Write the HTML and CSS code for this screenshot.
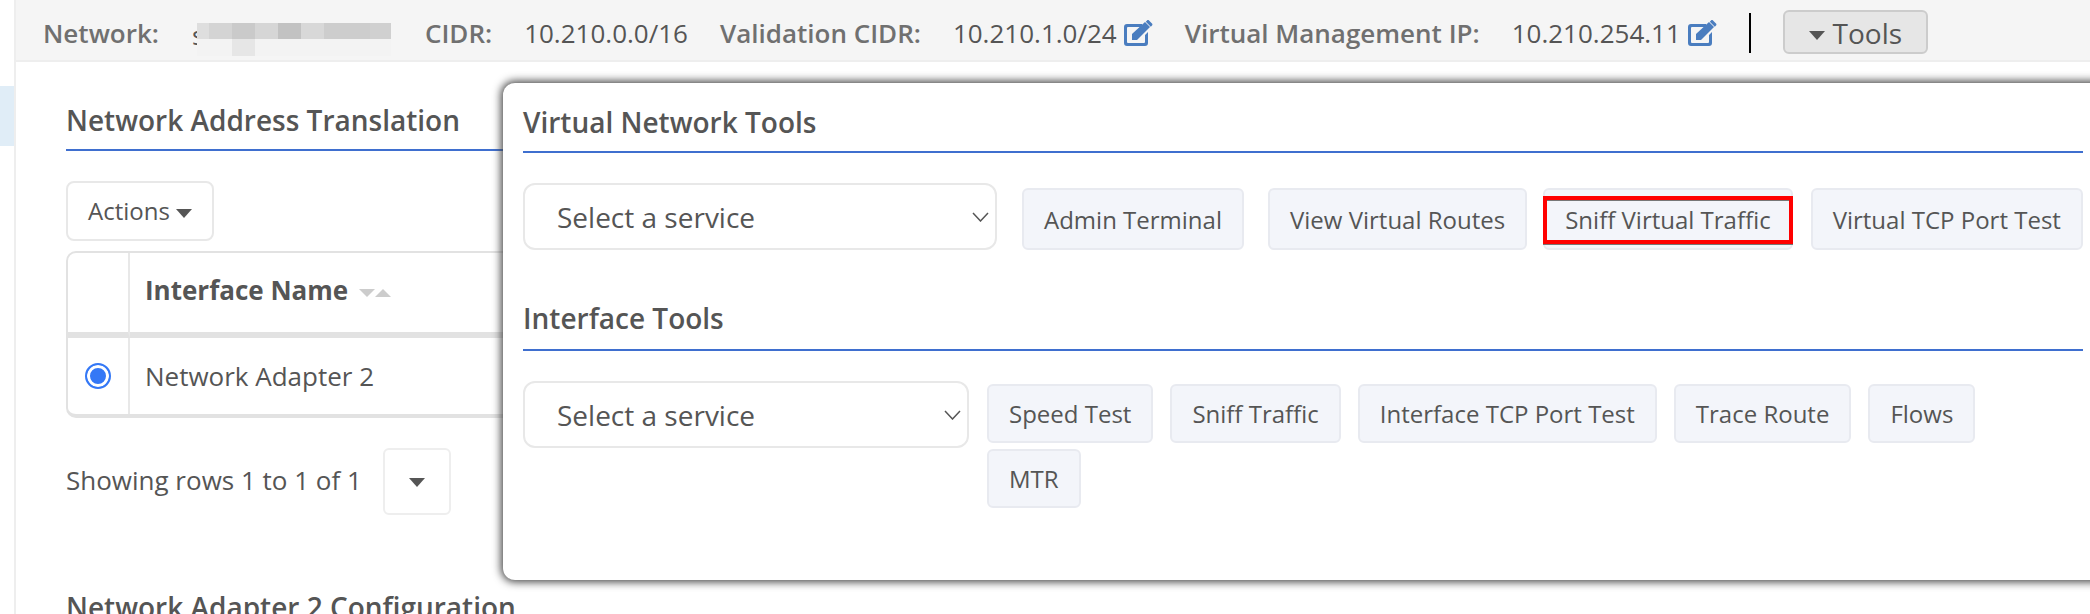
FILE: index.html
```html
<!DOCTYPE html>
<html lang="en">

<head>
    <meta charset="UTF-8" />
    <meta name="viewport" content="width=device-width, initial-scale=1.0" />
    <title>Network Tools</title>
    <link rel="stylesheet" href="styles.css">
</head>

<body>
    <div class="sidebar">
        <div class="sidebar-active"></div>
    </div>

    <div class="main">
        <div class="topbar">
            <span class="label label-network">Network:</span>
            <span class="masked">
                <span class="masked-letter">s</span>
                <span class="pixels">
                    <i class="p5"></i><i class="p2"></i><i class="p4"></i><i class="p6"></i><i class="p7"></i><i class="p8"></i><i class="p3"></i><i class="p3"></i><i class="p1"></i>
                    <i class="p0"></i><i class="p0"></i><i class="p9"></i><i class="p0"></i><i class="p0"></i><i class="p0"></i><i class="p0"></i><i class="p0"></i><i class="p0"></i>
                </span>
            </span>
            <span class="label label-cidr">CIDR:</span>
            <span class="value value-cidr">10.210.0.0/16</span>
            <span class="label label-validation">Validation CIDR:</span>
            <span class="value">10.210.1.0/24</span>
            <svg class="edit-icon" viewBox="0 0 30 28"><path d="M4 5h15v3H5a1 1 0 0 0-1 1v14a1 1 0 0 0 1 1h16a1 1 0 0 0 1-1v-7l3-3v11a3 3 0 0 1-3 3H4a3 3 0 0 1-3-3V8a3 3 0 0 1 3-3z"/><path d="M9 15 22 3l5 5-13 13H9z"/><path d="M24 1.500c.6-.6 1.500-.6 2 0l3 3c.6.6.6 1.400 0 2l-1.200 1.200-5-5z"/></svg>
            <span class="label label-vip">Virtual Management IP:</span>
            <span class="value">10.210.254.11</span>
            <svg class="edit-icon" viewBox="0 0 30 28"><path d="M4 5h15v3H5a1 1 0 0 0-1 1v14a1 1 0 0 0 1 1h16a1 1 0 0 0 1-1v-7l3-3v11a3 3 0 0 1-3 3H4a3 3 0 0 1-3-3V8a3 3 0 0 1 3-3z"/><path d="M9 15 22 3l5 5-13 13H9z"/><path d="M24 1.500c.6-.6 1.500-.6 2 0l3 3c.6.6.6 1.400 0 2l-1.200 1.200-5-5z"/></svg>
            <span class="divider"></span>
            <button type="button" class="tools-btn"><span class="caret"></span>Tools</button>
        </div>

        <div class="content">
            <h2 class="section-title">Network Address Translation</h2>
            <button type="button" class="actions-btn">Actions<span class="caret"></span></button>

            <table class="nat-table">
                <thead>
                    <tr>
                        <th class="radio-col"></th>
                        <th>Interface Name<span class="sort"><span class="sort-down"></span><span class="sort-up"></span></span></th>
                    </tr>
                </thead>
                <tbody>
                    <tr>
                        <td class="radio-col"><span class="radio"></span></td>
                        <td>Network Adapter 2</td>
                    </tr>
                </tbody>
            </table>

            <div class="pager">
                <span class="pager-text">Showing rows 1 to 1 of 1</span>
                <button type="button" class="pager-btn"><span class="caret"></span></button>
            </div>

            <h2 class="section-title section-config">Network Adapter 2 Configuration</h2>
        </div>
    </div>

    <div class="tools-popup">
        <h3 class="popup-title">Virtual Network Tools</h3>
        <div class="tool-row">
            <div class="fake-select select-virtual">Select a service
                <svg class="chevron" viewBox="0 0 17 10"><path d="M1 1l7.500 8 7.500-8"/></svg>
            </div>
            <div class="tool-buttons virtual-buttons">
                <button type="button" class="tool-btn btn-admin">Admin Terminal</button>
                <button type="button" class="tool-btn btn-routes">View Virtual Routes</button>
                <button type="button" class="tool-btn btn-sniff">Sniff Virtual Traffic<span class="highlight"></span></button>
                <button type="button" class="tool-btn">Virtual TCP Port Test</button>
            </div>
        </div>

        <h3 class="popup-title title-interface">Interface Tools</h3>
        <div class="tool-row">
            <div class="fake-select select-interface">Select a service
                <svg class="chevron" viewBox="0 0 17 10"><path d="M1 1l7.500 8 7.500-8"/></svg>
            </div>
            <div class="tool-buttons interface-buttons">
                <button type="button" class="tool-btn">Speed Test</button>
                <button type="button" class="tool-btn">Sniff Traffic</button>
                <button type="button" class="tool-btn">Interface TCP Port Test</button>
                <button type="button" class="tool-btn">Trace Route</button>
                <button type="button" class="tool-btn">Flows</button>
                <button type="button" class="tool-btn">MTR</button>
            </div>
        </div>
    </div>
</body>

</html>
```

FILE: styles.css
```css
* {
    box-sizing: border-box;
}

html,
body {
    height: 100%;
}

body {
    margin: 0;
    display: flex;
    overflow: hidden;
    position: relative;
    background-color: white;
    color: #555;
    font-family: "Open Sans", "Liberation Sans", sans-serif;
    font-size: 26px;
}

.sidebar {
    width: 16px;
    flex: none;
    padding-top: 86px;
    border-right: 2px solid #eeeeee;
}

.sidebar-active {
    height: 60px;
    background-color: #e0edf7;
}

.main {
    flex: 1;
    min-width: 0;
}

/* top bar */
.topbar {
    height: 62px;
    display: flex;
    align-items: center;
    padding: 6px 0 0 27px;
    background-color: #f5f5f5;
    border-bottom: 2px solid #eeeeee;
    white-space: nowrap;
}

.label {
    color: #707070;
    font-weight: 600;
}

.value {
    margin-left: 32px;
    color: #555;
}

.masked {
    width: 199px;
    height: 33px;
    margin: 12px 0 0 33px;
    display: flex;
    color: #555;
}

.masked-letter {
    width: 5px;
    margin-top: -6px;
}

.pixels {
    position: relative;
    width: 194px;
    height: 33px;
    display: grid;
    grid-template-columns: 12px repeat(7, 23px) 21px;
    grid-template-rows: 16px 17px;
}

.p0 {
    background-color: #f3f3f3;
}

.p1 {
    background-color: #d0d0d0;
}

.p2 {
    background-color: #d4d4d4;
}

.p3 {
    background-color: #cdcdcd;
}

.p4 {
    background-color: #cacaca;
}

.p5 {
    background-color: #dedede;
}

.p6 {
    background-color: #d6d6d6;
}

.p7 {
    background-color: #c2c2c2;
}

.p8 {
    background-color: #d8d8d8;
}

.p9 {
    background-color: #e6e6e6;
}

.label-cidr {
    margin-left: 34px;
}

.label-validation {
    margin-left: 32px;
}

.label-vip {
    margin-left: 32px;
}

.edit-icon {
    width: 30px;
    height: 28px;
    margin-left: 6px;
    fill: #4a7dbf;
}

.divider {
    width: 2px;
    height: 40px;
    margin-left: 32px;
    background-color: black;
}

.tools-btn {
    width: 145px;
    height: 44px;
    margin-left: 32px;
    margin-bottom: 2px;
    padding: 2px 0 0;
    display: flex;
    align-items: center;
    justify-content: center;
    background-color: #e6e6e6;
    border: 2px solid #cccccc;
    border-radius: 6px;
    color: #555;
    font-family: inherit;
    font-size: 28px;
}

.tools-btn .caret {
    margin-right: 8px;
    margin-top: 4px;
}

.caret {
    display: inline-block;
    vertical-align: middle;
    border-top: 9px solid #555;
    border-left: 8px solid transparent;
    border-right: 8px solid transparent;
}

/* page behind the popup */
.content {
    padding-left: 50px;
}

.section-title {
    margin: 39px 0 30px;
    padding-bottom: 10px;
    border-bottom: 2px solid #3f6fcf;
    color: #555;
    font-size: 28px;
    font-weight: 600;
    line-height: 38px;
}

.actions-btn {
    height: 60px;
    width: 148px;
    padding: 0 0 2px 20px;
    display: block;
    background-color: white;
    border: 2px solid #e8e8e8;
    border-radius: 8px;
    color: #555;
    font-family: inherit;
    font-size: 24px;
    text-align: left;
}

.actions-btn .caret {
    margin-left: 6px;
}

.nat-table {
    width: 100%;
    margin-top: 10px;
    border-collapse: separate;
    border-spacing: 0;
    border: 2px solid #e2e2e2;
    border-bottom-width: 4px;
    border-radius: 10px;
}

.nat-table th,
.nat-table td {
    padding: 0 0 0 15px;
    text-align: left;
}

.nat-table th {
    height: 85px;
    padding-bottom: 6px;
    border-bottom: 6px solid #e2e2e2;
    font-weight: 700;
}

.nat-table td {
    height: 76px;
}

.nat-table .radio-col {
    width: 62px;
    padding: 0;
    border-right: 2px solid #e8e8e8;
    text-align: center;
}

.radio {
    display: block;
    width: 26px;
    height: 26px;
    margin: auto;
    border: 2px solid #3478f6;
    border-radius: 50%;
    background-color: #3478f6;
    box-shadow: inset 0 0 0 3px white;
}

.sort {
    display: inline-flex;
    align-items: center;
    margin-left: 11px;
    vertical-align: middle;
}

.sort-down {
    border-top: 8px solid #ccc;
    border-left: 8px solid transparent;
    border-right: 8px solid transparent;
}

.sort-up {
    border-bottom: 8px solid #ccc;
    border-left: 8px solid transparent;
    border-right: 8px solid transparent;
}

.pager {
    margin-top: 30px;
    display: flex;
    align-items: flex-start;
    gap: 21px;
}

.pager-text {
    margin-top: 14px;
}

.pager-btn {
    width: 68px;
    height: 67px;
    padding: 0;
    background-color: white;
    border: 2px solid #eeeeee;
    border-radius: 6px;
}

.section-config {
    margin-top: 73px;
}

/* tools popup */
.tools-popup {
    position: absolute;
    left: 503px;
    top: 83px;
    right: -20px;
    height: 497px;
    padding: 20px 27px 0 20px;
    background-color: white;
    border-radius: 12px;
    box-shadow: 0 0 8px 2px #444;
}

.popup-title {
    margin: 0 0 30px;
    padding-bottom: 10px;
    border-bottom: 2px solid #3f6fcf;
    color: #555;
    font-size: 28px;
    font-weight: 600;
    line-height: 38px;
}

.title-interface {
    margin-top: 49px;
    padding-bottom: 12px;
}

.tool-row {
    display: flex;
    align-items: flex-start;
    gap: 18px;
}

.fake-select {
    height: 67px;
    flex: none;
    display: flex;
    align-items: center;
    justify-content: space-between;
    padding: 1px 6px 0 32px;
    background-color: white;
    border: 2px solid #e8e8e8;
    border-radius: 12px;
    font-size: 28px;
}

.select-virtual {
    width: 474px;
    margin-right: 7px;
}

.select-interface {
    width: 446px;
}

.chevron {
    width: 17px;
    height: 10px;
    margin-bottom: 1px;
    fill: none;
    stroke: #555;
    stroke-width: 1.500;
}

.tool-buttons {
    display: flex;
    flex-wrap: wrap;
    gap: 6px 17px;
}

.virtual-buttons {
    margin-top: 5px;
    flex-wrap: nowrap;
    column-gap: 18px;
}

.interface-buttons {
    width: 1010px;
    margin-top: 3px;
}

.tool-btn {
    height: 59px;
    padding: 0 20px;
    background-color: #f3f5fa;
    border: 2px solid #e8eaf0;
    border-radius: 6px;
    color: #555;
    font-family: inherit;
    font-size: 24px;
    white-space: nowrap;
}

.virtual-buttons .tool-btn {
    height: 62px;
}

.btn-admin {
    margin-right: 6px;
}

.btn-routes {
    margin-right: -2px;
}

.btn-sniff {
    position: relative;
}

.highlight {
    position: absolute;
    left: -2px;
    right: -2px;
    top: 6px;
    bottom: 4px;
    border: 4px solid red;
    box-shadow: inset 0 1px 0 #777, 0 1px 0 #777;
}
```
